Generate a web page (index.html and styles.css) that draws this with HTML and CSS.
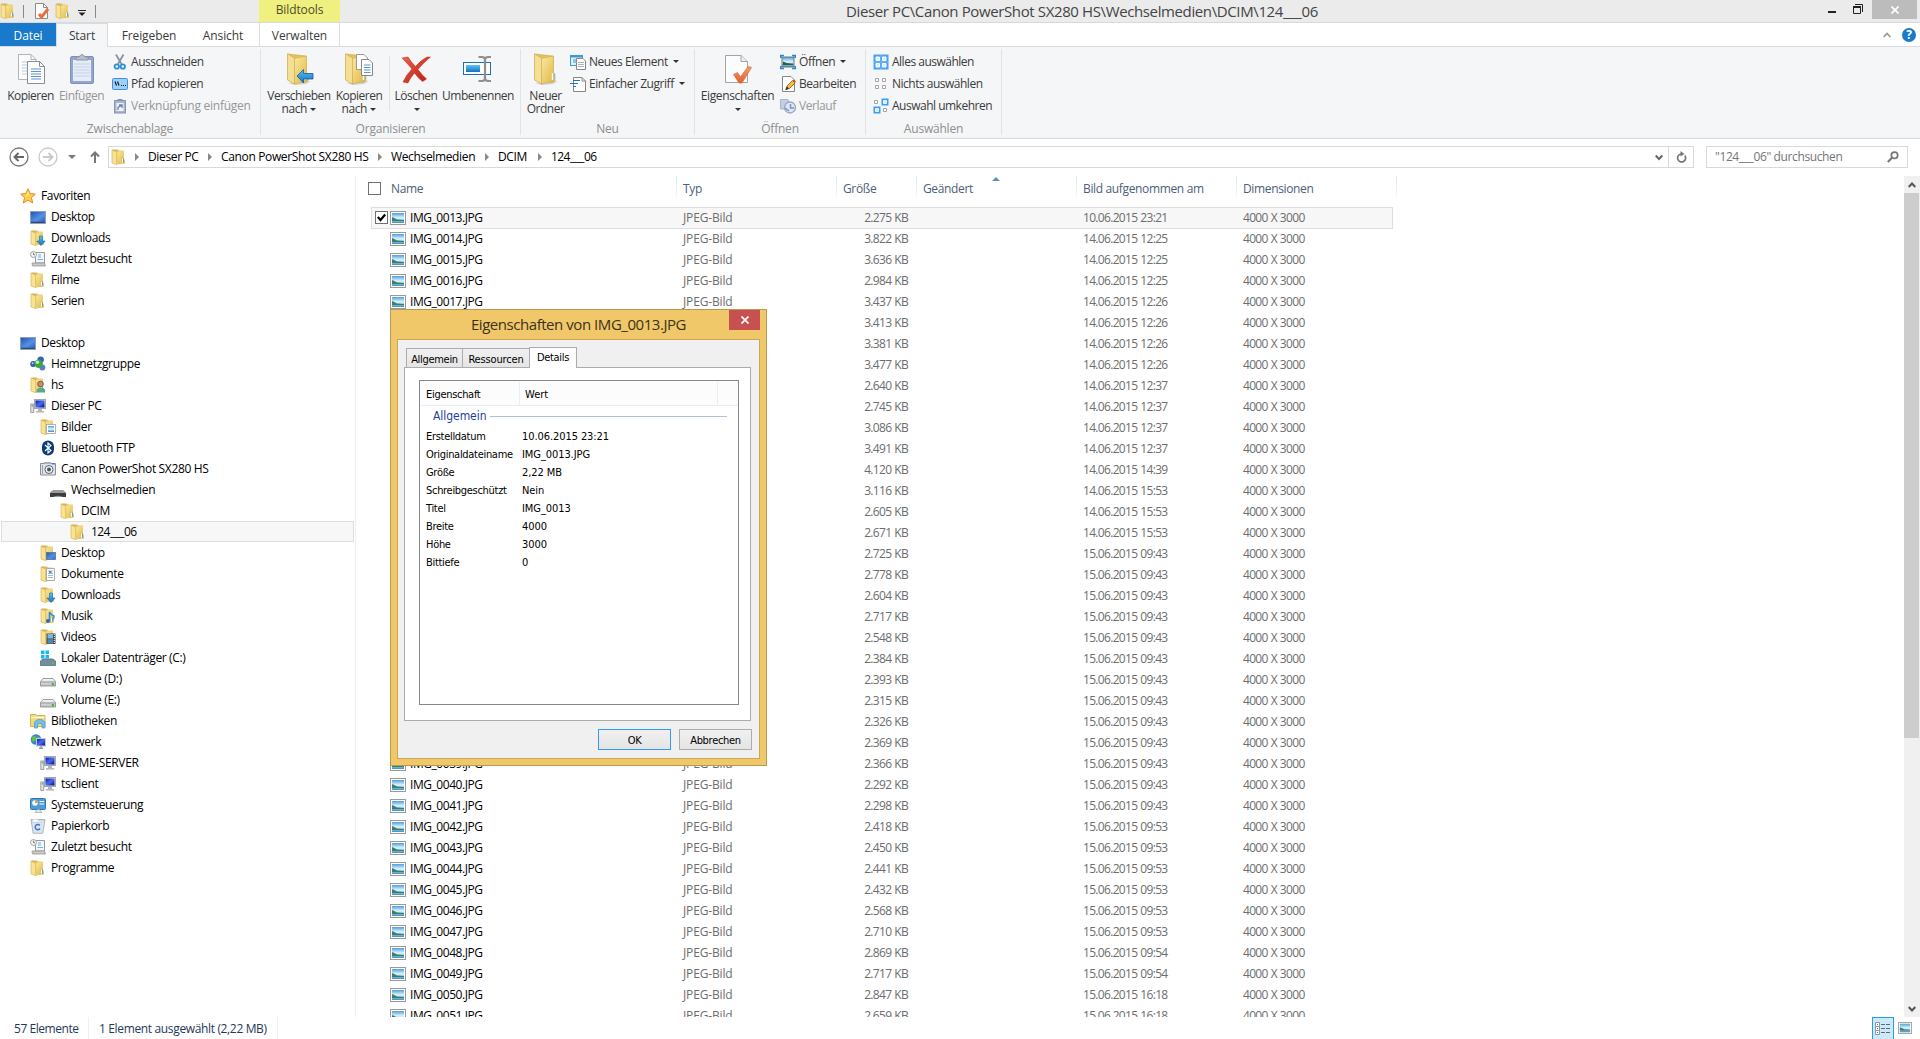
FILE: index.html
```
<!DOCTYPE html>
<html lang="de">
<head>
    <meta charset="UTF-8" />
    <meta name="viewport" content="width=device-width, initial-scale=1.0">
    <title>124___06</title>
    <link rel="stylesheet" href="styles.css">
</head>
<body>

<!-- Icon sprite -->
<svg class="sprite" aria-hidden="true">
    <defs>
        <linearGradient id="g-fold" x1="0" y1="0" x2="1" y2="1"><stop offset="0" stop-color="#fbeaa0"/><stop offset="1" stop-color="#dfb443"/></linearGradient>
        <linearGradient id="g-back" x1="0" y1="0" x2="1" y2="0"><stop offset="0" stop-color="#cfaa45"/><stop offset="1" stop-color="#f0d779"/></linearGradient>
        <linearGradient id="g-sky" x1="0" y1="0" x2="0" y2="1"><stop offset="0" stop-color="#4a9fe0"/><stop offset="0.5" stop-color="#e4f5fb"/><stop offset="1" stop-color="#3b8fc4"/></linearGradient>
        <linearGradient id="g-screen" x1="0" y1="0" x2="1" y2="1"><stop offset="0" stop-color="#2455b5"/><stop offset="0.6" stop-color="#5591e4"/><stop offset="1" stop-color="#2f62c0"/></linearGradient>
        <linearGradient id="g-navy" x1="0" y1="0" x2="1" y2="1"><stop offset="0" stop-color="#0a12b8"/><stop offset="0.5" stop-color="#4a6cf0"/><stop offset="1" stop-color="#05087a"/></linearGradient>
        <linearGradient id="g-disk" x1="0" y1="0" x2="0" y2="1"><stop offset="0" stop-color="#fafafa"/><stop offset="1" stop-color="#b9bcc2"/></linearGradient>
        <linearGradient id="g-arrow" x1="0" y1="0" x2="0" y2="1"><stop offset="0" stop-color="#5cc3f2"/><stop offset="1" stop-color="#1470c4"/></linearGradient>
        <linearGradient id="g-red" x1="0" y1="0" x2="1" y2="1"><stop offset="0" stop-color="#f0614a"/><stop offset="1" stop-color="#b81a10"/></linearGradient>
        <linearGradient id="g-orange" x1="0" y1="0" x2="0" y2="1"><stop offset="0" stop-color="#f4a06a"/><stop offset="1" stop-color="#e2602c"/></linearGradient>
    </defs>

    <symbol id="i-folder" viewBox="0 0 16 16">
        <path d="M1.500 .6H7L8 1.500H12.800V14H1.500Z" fill="url(#g-back)"/>
        <path d="M5.500 2.800L12.800 2V10.500L13.800 11.500V14.500L5.500 15.500Z" fill="url(#g-fold)"/>
        <path d="M1 1L5.700 3V15.700L1 14Z" fill="#f8e394" stroke="#d3ad48" stroke-width=".6"/>
        <path d="M11.500 10V13.600" stroke="#fff"/><path d="M12.600 9.500V13.600" stroke="#4a9fe0"/>
    </symbol>
    <symbol id="i-folder-lg" viewBox="0 0 26 32">
        <path d="M2 30L25 28L20 31L9 32Z" fill="#8a8a8a" opacity=".35"/>
        <path d="M2 1L20 3V29H8L2 27Z" fill="#e4c25e" stroke="#c9a545" stroke-width=".6"/>
        <path d="M8 5.500L20.500 3V20L22 21V28L8 31Z" fill="url(#g-fold)" stroke="#d0a940" stroke-width=".6"/>
        <path d="M1.500 .8L8.500 5V31L1.500 27Z" fill="#f4df94" stroke="#cfae50" stroke-width=".7"/>
        <path d="M19.500 20V27" stroke="#fff" stroke-width="1.400"/><path d="M21.200 20V27" stroke="#7fc0ea"/>
    </symbol>
    <symbol id="i-props" viewBox="0 0 16 16">
        <path d="M1.500 .5H9.500L13.500 4.500V15.500H1.500Z" fill="#fdfdfd" stroke="#8c8c8c"/><path d="M9.500 .5V4.500H13.500" fill="none" stroke="#8c8c8c"/>
        <path d="M5 11L7.500 14L14 6" fill="none" stroke="#e8703c" stroke-width="3"/>
    </symbol>
    <symbol id="i-picture" viewBox="0 0 16 14">
        <rect x=".5" y=".5" width="15" height="13" fill="#fff" stroke="#9a9a9a"/>
        <rect x="2" y="2" width="12" height="10" fill="url(#g-sky)"/>
        <path d="M2 6Q4 6.500 7 8.500L14 9V10H2Z" fill="#38806a"/>
    </symbol>
    <symbol id="i-star" viewBox="0 0 16 16"><path d="M8 .8L10.200 5.600L15.300 6.100L11.400 9.600L12.700 15L8 12.100L3.300 15L4.600 9.600L.7 6.100L5.800 5.600Z" fill="#ffcf4a" stroke="#e8862a"/><path d="M8 3.500L9 6.800L6 8Z" fill="#fff1b8"/></symbol>
    <symbol id="i-desktop" viewBox="0 0 16 16"><rect x=".5" y="2.500" width="15" height="12" fill="#40608f" stroke="#8ba0bd"/><rect x="1" y="3" width="14" height="9.500" fill="url(#g-screen)"/><path d="M1 13.500H15" stroke="#2f4a75"/></symbol>
    <symbol id="i-downloads" viewBox="0 0 16 16"><use href="#i-folder" width="16" height="16"/><path d="M9.500 6H12.500V11H15.200L11 15.600L6.800 11H9.500Z" fill="url(#g-arrow)" stroke="#1b69b0" stroke-width=".6"/></symbol>
    <symbol id="i-recent" viewBox="0 0 16 16">
        <path d="M5.500 1.500H14.500V12H5.500Z" fill="#f4f7fa" stroke="#9a9a9a"/><path d="M8 4H11M8 6H11M7.500 8.500H13" stroke="#6fb1e6"/>
        <path d="M2 12H14.500L15.500 15H2.500Z" fill="#c9c9c9" stroke="#8d8d8d" stroke-width=".7"/>
        <circle cx="3.500" cy="3.500" r="3" fill="#f1f1f1" stroke="#9c9c9c" stroke-width=".9"/><path d="M3.500 1.800V3.700H5" fill="none" stroke="#666" stroke-width=".8"/>
    </symbol>
    <symbol id="i-homegroup" viewBox="0 0 16 16">
        <circle cx="10.700" cy="3.600" r="3.200" fill="#3560c4"/><circle cx="3.200" cy="8" r="3" fill="#2f56c0"/><circle cx="12.300" cy="11.600" r="3" fill="#5b7cc8"/>
        <circle cx="8.600" cy="7.800" r="4.200" fill="#39a83c"/><circle cx="7.400" cy="6.300" r="1.700" fill="#c5efbb"/><circle cx="2.600" cy="7.200" r="1" fill="#c4d4f4"/>
    </symbol>
    <symbol id="i-user" viewBox="0 0 16 16"><use href="#i-folder" width="16" height="16"/><circle cx="10.500" cy="7" r="2.800" fill="#c98f68" stroke="#5e4630" stroke-width=".8"/><path d="M6.500 15.500V13Q10.500 8.500 15 12.500V15.500Z" fill="#5aa886"/></symbol>
    <symbol id="i-pc" viewBox="0 0 16 16">
        <rect x="4.500" y="1.500" width="11" height="9" fill="#d5d8dc" stroke="#a3a7ad"/><rect x="5.500" y="2.500" width="9" height="7" fill="url(#g-navy)"/>
        <path d="M8 11H12V13H14V14.500H6V13H8Z" fill="#b4b6ba"/><rect x=".8" y="6" width="3" height="8.500" fill="#dfe0e2" stroke="#8c8e92" stroke-width=".8"/><path d="M2.300 7V8.500" stroke="#55a040"/>
    </symbol>
    <symbol id="i-pictures" viewBox="0 0 16 16"><use href="#i-folder" width="16" height="16"/><rect x="6.500" y="5.500" width="9" height="9" fill="#fff" stroke="#9aa5ad" stroke-width=".8"/><rect x="8" y="7" width="6" height="6" fill="url(#g-sky)"/></symbol>
    <symbol id="i-bluetooth" viewBox="0 0 16 16"><rect x="2" y=".5" width="12" height="15" rx="6" fill="#0b3c78"/><path d="M5 5L11 10.500L8 13V3L11 5.500L5 11" fill="none" stroke="#fff" stroke-width="1.100"/></symbol>
    <symbol id="i-camera" viewBox="0 0 16 16">
        <path d="M.5 2.500H15.500V14H.5Z" fill="#dfe3e8" stroke="#87909a"/><path d="M4 1H11V3H4Z" fill="#a9b0b8"/><path d="M2.500 4V13" stroke="#9ba3ad"/>
        <circle cx="9" cy="8.500" r="4" fill="#f2f4f6" stroke="#5c6570"/><circle cx="9" cy="8.500" r="2" fill="#4b545e"/><rect x="12" y="2" width="3" height="1.500" fill="#3d83d6"/>
    </symbol>
    <symbol id="i-removable" viewBox="0 0 16 16"><path d="M3 8H13L16 10.500V15H0V10.500Z" fill="#9a9a9a"/><path d="M0 11H16V15H13Q8 12.500 3 15H0Z" fill="#3c3c3c"/></symbol>
    <symbol id="i-fdesktop" viewBox="0 0 16 16"><use href="#i-folder" width="16" height="16"/><rect x="6.500" y="7.500" width="9" height="7" fill="url(#g-screen)" stroke="#54759f" stroke-width=".8"/></symbol>
    <symbol id="i-documents" viewBox="0 0 16 16"><use href="#i-folder" width="16" height="16"/><path d="M6.500 2.500H14.500V14.500H6.500Z" fill="#fff" stroke="#9c9c9c" stroke-width=".8"/><path d="M8 5H13M8 7.500H13M8 9.500H13M8 11.500H13" stroke="#8fa9c2" stroke-width=".8"/><rect x="9" y="5" width="2.500" height="2" fill="#3b8ce0"/></symbol>
    <symbol id="i-music" viewBox="0 0 16 16"><use href="#i-folder" width="16" height="16"/><path d="M9.500 13V4Q11 7 14 8Q14.500 10 12.500 11.500" fill="none" stroke="#2a8de0" stroke-width="1.500"/><circle cx="8" cy="13" r="2" fill="#1c6fc4"/></symbol>
    <symbol id="i-videos" viewBox="0 0 16 16"><use href="#i-folder" width="16" height="16"/><rect x="6.500" y="4.500" width="9" height="10.500" fill="#444"/><rect x="7.500" y="5" width="5.500" height="4.500" fill="#7db6e4"/><rect x="7.500" y="10.200" width="5.500" height="4.500" fill="#4d86b8"/><path d="M14.300 5V15" stroke="#fff" stroke-dasharray="1 1"/></symbol>
    <symbol id="i-disk" viewBox="0 0 16 16"><path d="M3 7.500H13L15.500 10.500V15H.5V10.500Z" fill="url(#g-disk)" stroke="#858585" stroke-width=".8"/><path d="M1 11H15" stroke="#777" stroke-width=".7"/><rect x="11.800" y="12" width="2" height="2.300" fill="#35b52c"/></symbol>
    <symbol id="i-disk-c" viewBox="0 0 16 16"><path d="M3 9H13L15.500 11V15.500H.5V11Z" fill="#6f8f9c" stroke="#667" stroke-width=".8"/><rect x="12" y="12" width="2" height="2" fill="#40d040"/><path d="M1 .5H4.500V4H1ZM5.500 .5H9V4H5.500ZM1 5H4.500V8.500H1ZM5.500 5H9V8.500H5.500Z" fill="#19b9f1"/></symbol>
    <symbol id="i-libraries" viewBox="0 0 16 16"><path d="M.5 1.500H6L7 2.500H15V13.500H.5Z" fill="#f2d778" stroke="#c9a540" stroke-width=".8"/><path d="M1 4.500H14.500" stroke="#fff6cf" stroke-width="1.500"/><path d="M4.500 15V9Q9.500 3.500 15 9V15H12V11Q10 9.500 7.500 11V15Z" fill="#72c1ea" stroke="#4596c9" stroke-width=".7"/></symbol>
    <symbol id="i-network" viewBox="0 0 16 16"><circle cx="6" cy="5.500" r="5.300" fill="#2f86cf"/><path d="M2 2.500Q6 1 6.500 3.500T3 8Q.8 6 2 2.500ZM7 2L10 3.500L8 5.500Z" fill="#5cc04e"/><rect x="6.500" y="4.500" width="9" height="7.500" fill="url(#g-navy)" stroke="#c5c9d4"/><path d="M9 14.300H13M11 12V14" stroke="#9a9a9a" stroke-width="1.400"/></symbol>
    <symbol id="i-control" viewBox="0 0 16 16"><rect x=".5" y="1.500" width="15" height="11" rx="1" fill="#4c9edb" stroke="#3278b5"/><circle cx="5" cy="6" r="2.800" fill="#f7f7f7"/><path d="M5 6V3.200A2.800 2.800 0 0 1 7.800 6Z" fill="#f29a2e"/><path d="M9.500 4.500H14M9.500 7H14" stroke="#fff"/><path d="M5 15.500Q8 9 12 15.500Z" fill="#e4e6e8" stroke="#999" stroke-width=".6"/></symbol>
    <symbol id="i-trash" viewBox="0 0 16 16"><path d="M1 1.500L15 1.500L12.800 15.300H3.200Z" fill="#dbe5ee" stroke="#9fb0c0" stroke-width=".9"/><path d="M2 2Q6 0 8 2T14 2L13.500 4H2.300Z" fill="#fff" stroke="#b9c5d0" stroke-width=".6"/><path d="M9.800 7.500A2.600 2.600 0 1 0 10 10.500" fill="none" stroke="#3c7cd0" stroke-width="1.500"/></symbol>

    <symbol id="i-copy" viewBox="0 0 30 32">
        <path d="M2.500 1.500H15L20 6.500V26.500H2.500Z" fill="#fcfcfc" stroke="#b3b3b3"/><path d="M15 1.500V6.500H20" fill="none" stroke="#b3b3b3"/><path d="M6 9H14M6 12H12M6 15H12M6 18H12M6 21H12" stroke="#b7d0e6"/>
        <path d="M11.500 8.500H23.500L28.500 13.500V30.500H11.500Z" fill="#fff" stroke="#8d8d8d"/><path d="M23.500 8.500V13.500H28.500" fill="none" stroke="#8d8d8d"/><path d="M15 16H25M15 18.500H25M15 21H25M15 23.500H25M15 26H25" stroke="#5b95cf" stroke-width="1.200"/>
    </symbol>
    <symbol id="i-paste" viewBox="0 0 26 32"><rect x="1.500" y="3.500" width="23" height="27" rx="1.500" fill="#93a6cc" stroke="#7d90b8"/><rect x="4" y="7" width="18" height="21" fill="#e6ecf8"/><path d="M5 11H21M5 14H21M5 17H21M5 20H21M5 23H21" stroke="#c5d2ea"/><path d="M7 7V4H10Q13 -1 16 4H19V7Z" fill="#b9c0cc" stroke="#8c95a8"/></symbol>
    <symbol id="i-cut" viewBox="0 0 16 16"><path d="M4 .5L9.500 10M11.500 .5L6 10" stroke="#8b949e" stroke-width="1.800"/><circle cx="4.800" cy="12.500" r="2.200" fill="none" stroke="#2b8fd6" stroke-width="1.800"/><circle cx="10.800" cy="12.500" r="2.200" fill="none" stroke="#2b8fd6" stroke-width="1.800"/></symbol>
    <symbol id="i-path" viewBox="0 0 16 16"><rect x=".5" y="2.500" width="15" height="11" rx="1" fill="#9fd0fb" stroke="#3d8fe0"/><path d="M3 5.500L4.500 9.500M5.500 5.500L7 9.500M9 9.500H10M11 9.500H12M13 9.500H14" stroke="#111" stroke-width="1.100"/></symbol>
    <symbol id="i-link" viewBox="0 0 16 16"><rect x="2.500" y="2.500" width="11" height="12.500" fill="#a9b6d0" stroke="#8796b5"/><path d="M5.500 1H10.500V3H5.500Z" fill="#8796b5"/><rect x="4.500" y="5" width="7" height="8" fill="#eef2f9"/><path d="M6 12V9.500L9.500 7.500M7 7H10V10" fill="none" stroke="#6f81a8" stroke-width="1.300"/></symbol>
    <symbol id="i-moveto" viewBox="0 0 32 32"><use href="#i-folder-lg" x="3" width="26" height="32"/><path d="M14 23L20.500 16.500V20.500H30V26H20.500V30Z" fill="url(#g-arrow)" stroke="#17599a" stroke-width=".8"/></symbol>
    <symbol id="i-copyto" viewBox="0 0 32 32"><use href="#i-folder-lg" x="1" width="26" height="32"/><path d="M13.500 1.500H21L24.500 5V16.500H13.500Z" fill="#fdfdfd" stroke="#999"/><path d="M18.500 6.500H26L29.500 10V22.500H18.500Z" fill="#fff" stroke="#888"/><path d="M21 12H27.500M21 14.500H27.500M21 17H27.500M21 19.500H27.500" stroke="#5b95cf"/></symbol>
    <symbol id="i-delete" viewBox="0 0 32 32"><path d="M2 5L8 4Q11 9 15.500 13.500Q21 7 27 4L30.500 4Q22 11 18 16.500Q22 22 26.500 26L22.500 28.500Q18 25 14.500 20Q10 25 8 30L3 29Q6 22 12 16Q7 10 2 5Z" fill="url(#g-red)" stroke="#b5281a" stroke-width=".5"/></symbol>
    <symbol id="i-rename" viewBox="0 0 32 32"><rect x="1.500" y="9.500" width="27" height="12" fill="#fff" stroke="#1f6fb4"/><rect x="4" y="12" width="14" height="7" fill="url(#g-arrow)"/><path d="M16.500 4H20Q23 4 23 7V25Q23 28 20 28H16.500M29 4H26Q23 4 23 7V25Q23 28 26 28H29" fill="none" stroke="#8f8f8f" stroke-width="2.200"/></symbol>
    <symbol id="i-newitem" viewBox="0 0 16 16"><rect x=".5" y="1.500" width="12" height="10" fill="#dff0fb" stroke="#3f9ad4"/><path d="M1 2.500H12" stroke="#3f9ad4" stroke-width="2"/><path d="M3 6H6M3 8H6" stroke="#3f9ad4"/><path d="M6.500 4.500H13L15.500 7V15.500H6.500Z" fill="#fff" stroke="#888"/><path d="M8 8.500H14M8 10.500H14M8 12.500H14" stroke="#a9b4bf"/></symbol>
    <symbol id="i-access" viewBox="0 0 16 16"><path d="M3.500 1.500H12L15.500 5V15.500H3.500Z" fill="#fff" stroke="#888"/><path d="M12 1.500V5H15.500" fill="none" stroke="#888"/><path d="M3 4.500H10M0 7.500H8M3 10.500H6" stroke="#2474c4" stroke-width="1.200"/></symbol>
    <symbol id="i-props-lg" viewBox="0 0 28 32"><path d="M1.500 2.500H17L23.500 8.500V29.500H1.500Z" fill="#fcfcfc" stroke="#a3a3a3"/><path d="M17 2.500V8.500H23.500" fill="#eee" stroke="#a3a3a3"/><path d="M9.500 21.500L13.500 19.500L16.500 24L24 13.500L27.500 14.500L18 30H15Z" fill="url(#g-orange)" stroke="#d0602f" stroke-width=".6"/></symbol>
    <symbol id="i-open" viewBox="0 0 16 16"><rect x="2" y="3" width="12" height="10" fill="url(#g-sky)" stroke="#777"/><path d="M3 7.500Q7 10 13 9.500V11H3Z" fill="#25604c"/><path d="M.8 4V1.500H4M12 1.500H15.200V4M15.200 12V14.500H12M4 14.500H.8V12" fill="none" stroke="#2d87d2" stroke-width="1.700"/></symbol>
    <symbol id="i-edit" viewBox="0 0 16 16"><path d="M2.500 .5H11L14.500 4V15.500H2.500Z" fill="#fff" stroke="#888"/><path d="M6 13.500L7 10L12.500 4.500L15 7L9.500 12.500Z" fill="#f1bf3c" stroke="#8b5a20" stroke-width=".8"/><path d="M12.500 4.500L14 3.500L15.800 5.500L15 7Z" fill="#d9482f"/><path d="M5 14.300L7 10.500L9 12.500Z" fill="#333"/></symbol>
    <symbol id="i-history" viewBox="0 0 16 16"><path d="M.5 1.500H8L9 5V11H.5Z" fill="#c5cfe2" stroke="#a9b5cf"/><circle cx="10" cy="9.500" r="5.500" fill="#dfe5f1" stroke="#98a6c6" stroke-width="1.300"/><path d="M10.500 6V10H14M5 10L9 13" fill="none" stroke="#8293ba" stroke-width="1.500"/></symbol>
    <symbol id="i-selall" viewBox="0 0 16 16"><path d="M.5 .5H15.500V15.500H.5Z" fill="#48a2f5"/><path d="M3 3H6.500V6.500H3ZM9.500 3H13V6.500H9.500ZM3 9.500H6.500V13H3ZM9.500 9.500H13V13H9.500Z" fill="#d7ecff" stroke="#fff"/><path d="M8 1V15M1 8H15" stroke="#7cbcf7" stroke-width=".8"/></symbol>
    <symbol id="i-selnone" viewBox="0 0 16 16"><path d="M2.500 2.500H5.500V5.500H2.500ZM9.500 2.500H12.500V5.500H9.500ZM2.500 9.500H5.500V12.500H2.500ZM9.500 9.500H12.500V12.500H9.500Z" fill="#fff" stroke="#a3a3a3"/></symbol>
    <symbol id="i-selinv" viewBox="0 0 16 16"><path d="M8.500 .5H15.500V7.500H8.500ZM.5 8.500H7.500V15.500H.5Z" fill="#3f9df3"/><path d="M10.500 2.500H13.500V5.500H10.500ZM2.500 10.500H5.500V13.500H2.500Z" fill="#d7ecff" stroke="#fff" stroke-width=".8"/><path d="M1.500 2.500H4.500V5.500H1.500ZM10.500 10.500H13.500V13.500H10.500Z" fill="#fff" stroke="#a3a3a3"/></symbol>
</svg>

<!-- Title bar -->
<header class="titlebar">
    <div class="quick">
        <svg class="ico"><use href="#i-folder"/></svg>
        <span class="bar"></span>
        <svg class="ico"><use href="#i-props"/></svg>
        <svg class="ico"><use href="#i-folder"/></svg>
        <svg class="more" viewBox="0 0 8 6"><path d="M0 .5H8" stroke="#222"/><path d="M.5 2.500H7.500L4 6Z" fill="#222"/></svg>
        <span class="bar"></span>
    </div>
    <div class="tooltab">Bildtools</div>
    <h1 class="title">Dieser PC\Canon PowerShot SX280 HS\Wechselmedien\DCIM\124___06</h1>
    <div class="controls">
        <svg class="min" viewBox="0 0 8 2"><path d="M0 0H8V2H0Z" fill="#222"/></svg>
        <svg class="restore" viewBox="0 0 10 10"><path d="M2 .5H9.500V8M.5 9.500V3H7.500V9.500Z" fill="none" stroke="#222"/><path d="M0 3H8" stroke="#222" stroke-width="2"/></svg>
        <span class="close"><svg viewBox="0 0 8 8"><path d="M.5 .5L7.500 7.500M7.500 .5L.5 7.500" stroke="#fff" stroke-width="1.600"/></svg></span>
    </div>
</header>

<!-- Ribbon tabs -->
<nav class="tabs">
    <span class="tab file">Datei</span>
    <span class="tab active">Start</span>
    <span class="tab share">Freigeben</span>
    <span class="tab view">Ansicht</span>
    <span class="tab manage">Verwalten</span>
    <div class="tabs-right">
        <svg class="chev" viewBox="0 0 8 6"><path d="M.7 5L4 1.500L7.300 5" fill="none" stroke="#999" stroke-width="1.800"/></svg>
        <span class="help">?</span>
    </div>
</nav>

<!-- Ribbon -->
<section class="ribbon">
    <div class="group clip">
        <div class="tools">
            <div class="big copy"><svg width="30" height="32"><use href="#i-copy"/></svg><span>Kopieren</span></div>
            <div class="big paste off"><svg width="26" height="32"><use href="#i-paste"/></svg><span>Einfügen</span></div>
            <div class="small-col">
                <div class="small"><svg class="ico"><use href="#i-cut"/></svg>Ausschneiden</div>
                <div class="small"><svg class="ico"><use href="#i-path"/></svg>Pfad kopieren</div>
                <div class="small link off"><svg class="ico"><use href="#i-link"/></svg>Verknüpfung einfügen</div>
            </div>
        </div>
        <div class="label">Zwischenablage</div>
    </div>
    <div class="group organize">
        <div class="tools">
            <div class="big move"><svg width="32" height="32"><use href="#i-moveto"/></svg><span>Verschieben<br>nach <i class="caret"></i></span></div>
            <div class="big copyto"><svg width="32" height="32"><use href="#i-copyto"/></svg><span>Kopieren<br>nach <i class="caret"></i></span></div>
            <div class="divider"></div>
            <div class="big delete"><svg width="32" height="32"><use href="#i-delete"/></svg><span>Löschen<br><i class="caret"></i></span></div>
            <div class="big rename"><svg width="32" height="32"><use href="#i-rename"/></svg><span>Umbenennen</span></div>
        </div>
        <div class="label">Organisieren</div>
    </div>
    <div class="group new">
        <div class="tools">
            <div class="big folder"><svg width="26" height="32"><use href="#i-folder-lg"/></svg><span>Neuer<br>Ordner</span></div>
            <div class="small-col">
                <div class="small"><svg class="ico"><use href="#i-newitem"/></svg>Neues Element <i class="caret"></i></div>
                <div class="small"><svg class="ico"><use href="#i-access"/></svg>Einfacher Zugriff <i class="caret"></i></div>
            </div>
        </div>
        <div class="label">Neu</div>
    </div>
    <div class="group open">
        <div class="tools">
            <div class="big props"><svg width="28" height="32"><use href="#i-props-lg"/></svg><span>Eigenschaften<br><i class="caret"></i></span></div>
            <div class="small-col">
                <div class="small"><svg class="ico"><use href="#i-open"/></svg>Öffnen <i class="caret"></i></div>
                <div class="small"><svg class="ico"><use href="#i-edit"/></svg>Bearbeiten</div>
                <div class="small off"><svg class="ico"><use href="#i-history"/></svg>Verlauf</div>
            </div>
        </div>
        <div class="label">Öffnen</div>
    </div>
    <div class="group select">
        <div class="tools">
            <div class="small-col">
                <div class="small"><svg class="ico"><use href="#i-selall"/></svg>Alles auswählen</div>
                <div class="small"><svg class="ico"><use href="#i-selnone"/></svg>Nichts auswählen</div>
                <div class="small"><svg class="ico"><use href="#i-selinv"/></svg>Auswahl umkehren</div>
            </div>
        </div>
        <div class="label">Auswählen</div>
    </div>
</section>

<!-- Address bar -->
<div class="addressbar">
    <div class="navbtns">
        <svg class="round" viewBox="0 0 20 20"><circle cx="10" cy="10" r="9" fill="none" stroke="#777" stroke-width="1.300"/><path d="M15 10H6M9.500 6L5.500 10L9.500 14" fill="none" stroke="#666" stroke-width="1.900"/></svg>
        <svg class="round" viewBox="0 0 20 20"><circle cx="10" cy="10" r="9" fill="none" stroke="#c9c9c9" stroke-width="1.300"/><path d="M5 10H14M10.500 6L14.500 10L10.500 14" fill="none" stroke="#c9c9c9" stroke-width="1.900"/></svg>
        <svg class="hist" viewBox="0 0 8 4"><path d="M0 0H8L4 4Z" fill="#777"/></svg>
        <svg class="up" viewBox="0 0 10 12"><path d="M5 12V1.500M1 5.500L5 1.500L9 5.500" fill="none" stroke="#777" stroke-width="2"/></svg>
    </div>
    <div class="path">
        <svg class="ico"><use href="#i-folder"/></svg>
        <i class="arrow"></i><span class="c-pc">Dieser PC</span>
        <i class="arrow"></i><span class="c-canon">Canon PowerShot SX280 HS</span>
        <i class="arrow"></i><span class="c-media">Wechselmedien</span>
        <i class="arrow"></i><span class="c-dcim">DCIM</span>
        <i class="arrow"></i><span class="c-dir">124___06</span>
        <svg class="drop" viewBox="0 0 8 7"><path d="M.7 1.500L4 5L7.300 1.500" fill="none" stroke="#666" stroke-width="2"/></svg>
        <span class="refresh"><svg viewBox="0 0 11 12"><path d="M8.800 4.500A4 4 0 1 1 5 3" fill="none" stroke="#777" stroke-width="1.700"/><path d="M4.500 0L8.500 3L4.500 5.500Z" fill="#777"/></svg></span>
    </div>
    <div class="search">
        <span>"124___06" durchsuchen</span>
        <svg viewBox="0 0 12 12"><circle cx="7.500" cy="4.300" r="3.200" fill="none" stroke="#777" stroke-width="1.700"/><path d="M5 6.800L.8 11" stroke="#777" stroke-width="2"/></svg>
    </div>
</div>

<!-- Content -->
<main class="content">
    <aside class="tree">
        <div class="node l0"><svg class="ico"><use href="#i-star"/></svg>Favoriten</div>
        <div class="node l1"><svg class="ico"><use href="#i-desktop"/></svg>Desktop</div>
        <div class="node l1"><svg class="ico"><use href="#i-downloads"/></svg>Downloads</div>
        <div class="node l1"><svg class="ico"><use href="#i-recent"/></svg>Zuletzt besucht</div>
        <div class="node l1"><svg class="ico"><use href="#i-folder"/></svg>Filme</div>
        <div class="node l1 last"><svg class="ico"><use href="#i-folder"/></svg>Serien</div>
        <div class="node l0"><svg class="ico"><use href="#i-desktop"/></svg>Desktop</div>
        <div class="node l1"><svg class="ico"><use href="#i-homegroup"/></svg>Heimnetzgruppe</div>
        <div class="node l1"><svg class="ico"><use href="#i-user"/></svg>hs</div>
        <div class="node l1"><svg class="ico"><use href="#i-pc"/></svg>Dieser PC</div>
        <div class="node l2"><svg class="ico"><use href="#i-pictures"/></svg>Bilder</div>
        <div class="node l2"><svg class="ico"><use href="#i-bluetooth"/></svg>Bluetooth FTP</div>
        <div class="node l2"><svg class="ico"><use href="#i-camera"/></svg>Canon PowerShot SX280 HS</div>
        <div class="node l3"><svg class="ico"><use href="#i-removable"/></svg>Wechselmedien</div>
        <div class="node l4"><svg class="ico"><use href="#i-folder"/></svg>DCIM</div>
        <div class="node l5 selected"><svg class="ico"><use href="#i-folder"/></svg>124___06</div>
        <div class="node l2"><svg class="ico"><use href="#i-fdesktop"/></svg>Desktop</div>
        <div class="node l2"><svg class="ico"><use href="#i-documents"/></svg>Dokumente</div>
        <div class="node l2"><svg class="ico"><use href="#i-downloads"/></svg>Downloads</div>
        <div class="node l2"><svg class="ico"><use href="#i-music"/></svg>Musik</div>
        <div class="node l2"><svg class="ico"><use href="#i-videos"/></svg>Videos</div>
        <div class="node l2"><svg class="ico"><use href="#i-disk-c"/></svg>Lokaler Datenträger (C:)</div>
        <div class="node l2"><svg class="ico"><use href="#i-disk"/></svg>Volume (D:)</div>
        <div class="node l2"><svg class="ico"><use href="#i-disk"/></svg>Volume (E:)</div>
        <div class="node l1"><svg class="ico"><use href="#i-libraries"/></svg>Bibliotheken</div>
        <div class="node l1"><svg class="ico"><use href="#i-network"/></svg>Netzwerk</div>
        <div class="node l2"><svg class="ico"><use href="#i-pc"/></svg>HOME-SERVER</div>
        <div class="node l2"><svg class="ico"><use href="#i-pc"/></svg>tsclient</div>
        <div class="node l1"><svg class="ico"><use href="#i-control"/></svg>Systemsteuerung</div>
        <div class="node l1"><svg class="ico"><use href="#i-trash"/></svg>Papierkorb</div>
        <div class="node l1"><svg class="ico"><use href="#i-recent"/></svg>Zuletzt besucht</div>
        <div class="node l1"><svg class="ico"><use href="#i-folder"/></svg>Programme</div>
    </aside>

    <section class="files">
        <div class="columns">
            <div class="col name"><span class="check"></span>Name</div>
            <div class="col">Typ</div>
            <div class="col">Größe</div>
            <div class="col sorted">Geändert<i class="sort"></i></div>
            <div class="col">Bild aufgenommen am</div>
            <div class="col">Dimensionen</div>
        </div>
        <div id="rows"></div>
    </section>

    <div class="scrollbar">
        <svg viewBox="0 0 8 6"><path d="M.7 5L4 1.500L7.300 5" fill="none" stroke="#555" stroke-width="2"/></svg>
        <div class="thumb"></div>
        <svg viewBox="0 0 8 6"><path d="M.7 1L4 4.500L7.300 1" fill="none" stroke="#555" stroke-width="2"/></svg>
    </div>
</main>

<!-- Status bar -->
<footer class="status">
    <span class="count">57 Elemente</span>
    <span class="picked">1 Element ausgewählt (2,22 MB)</span>
    <div class="views">
        <span class="viewbtn on"><svg width="16" height="14" viewBox="0 0 16 14"><path d="M.5 .5H4.500V4.500H.5ZM.5 4.500H4.500V8.500H.5ZM.5 8.500H4.500V12.500H.5Z" fill="#fff" stroke="#8896b0"/><path d="M2 2H3V3H2Z" fill="#3a9a30"/><path d="M2 6H3V7H2Z" fill="#e02020"/><path d="M2 10H3V11H2Z" fill="#2060d0"/><path d="M6 2.500H10M11 2.500H15M6 6.500H10M11 6.500H15M6 10.500H10M11 10.500H15" stroke="#566a86"/></svg></span>
        <svg class="thumbs" width="14" height="12"><use href="#i-picture"/></svg>
    </div>
</footer>

<!-- Properties dialog -->
<div class="dialog">
    <div class="dlg-title"><span>Eigenschaften von IMG_0013.JPG</span></div>
    <span class="dlg-close"><svg viewBox="0 0 8 8"><path d="M.5 .5L7.500 7.500M7.500 .5L.5 7.500" stroke="#fff" stroke-width="1.700"/></svg></span>
    <div class="dlg-body">
        <div class="dlg-tabs">
            <span class="dtab t-general">Allgemein</span>
            <span class="dtab t-res">Ressourcen</span>
            <span class="dtab t-details">Details</span>
        </div>
        <div class="page">
            <div class="proplist">
                <div class="prophead"><span class="key">Eigenschaft</span><span class="val">Wert</span><span class="rest"></span></div>
                <div class="propgroup">Allgemein</div>
                <dl>
                    <dt>Erstelldatum</dt><dd>10.06.2015 23:21</dd>
                    <dt>Originaldateiname</dt><dd>IMG_0013.JPG</dd>
                    <dt>Größe</dt><dd>2,22 MB</dd>
                    <dt>Schreibgeschützt</dt><dd>Nein</dd>
                    <dt>Titel</dt><dd>IMG_0013</dd>
                    <dt>Breite</dt><dd>4000</dd>
                    <dt>Höhe</dt><dd>3000</dd>
                    <dt>Bittiefe</dt><dd>0</dd>
                </dl>
            </div>
        </div>
        <div class="buttons"><span class="btn default">OK</span><span class="btn">Abbrechen</span></div>
    </div>
</div>

<script src="script.js"></script>
</body>
</html>
```
FILE: styles.css
```
/* Base Styles */
* {
    margin: 0;
    padding: 0;
    box-sizing: border-box;
}

body {
    width: 1920px;
    height: 1039px;
    overflow: hidden;
    display: flex;
    flex-direction: column;
    position: relative;
    background: #fff;
    color: #000;
    font-family: "Open Sans", "Noto Sans", sans-serif;
    font-size: 12px;
    letter-spacing: -0.35px;
    white-space: nowrap;
}

svg {
    display: block;
    flex: none;
}

.sprite {
    position: absolute;
    width: 0;
    height: 0;
}

.ico {
    width: 16px;
    height: 16px;
}

/* Title bar */
.titlebar {
    flex: none;
    display: flex;
    height: 23px;
    background: #ebebeb;
    border-bottom: 1px solid #d9d9d9;
}

.quick {
    display: flex;
    width: 259px;
    padding-top: 3px;
}

.quick .bar {
    width: 1px;
    height: 13px;
    margin: 2px 10px 0 7px;
    background: #888;
}

.quick .ico + .ico {
    margin-left: 5px;
}

.quick .more {
    width: 8px;
    height: 6px;
    margin: 7px 2px 0 7px;
}

.tooltab {
    width: 81px;
    background: #f0f080;
    color: #4d4d28;
    text-align: center;
    line-height: 20px;
    letter-spacing: -0.1px;
}

.title {
    flex: 1;
    padding-left: 506px;
    font-size: 15px;
    font-weight: normal;
    line-height: 23px;
    letter-spacing: -0.38px;
    color: #444;
}

.controls {
    display: flex;
    width: 92px;
}

.min {
    width: 8px;
    height: 2px;
    margin: 11px 17px 0 0;
}

.restore {
    width: 10px;
    height: 10px;
    margin: 4px 9px 0 0;
}

.close {
    display: flex;
    align-items: center;
    justify-content: center;
    width: 45px;
    height: 19px;
    background: #bcbcbc;
}

.close svg,
.dlg-close svg {
    width: 8px;
    height: 8px;
}

/* Ribbon tabs */
.tabs {
    flex: none;
    display: flex;
    height: 24px;
    border-bottom: 1px solid #dadbdc;
    color: #3b3b3b;
    letter-spacing: -0.1px;
    line-height: 26px;
    text-align: center;
}

.tab {
    height: 23px;
}

.tab.file {
    width: 56px;
    background: #1979ca;
    color: #fff;
}

.tab.active {
    width: 52px;
    height: 24px;
    background: #f5f6f7;
    border: 1px solid #dadbdc;
    border-bottom: 0;
    line-height: 24px;
}

.tab.share {
    width: 82px;
}

.tab.view {
    width: 66px;
}

.tab.manage {
    width: 81px;
    margin-left: 3px;
    border: solid #dcdcdc;
    border-width: 0 1px;
}

.tabs-right {
    display: flex;
    align-items: center;
    margin-left: auto;
    padding-right: 4px;
}

.chev {
    width: 8px;
    height: 6px;
    margin-right: 11px;
}

.help {
    width: 14px;
    height: 14px;
    border-radius: 7px;
    background: #1979ca;
    color: #fff;
    font-weight: bold;
    line-height: 14px;
}

/* Ribbon */
.ribbon {
    flex: none;
    display: flex;
    height: 92px;
    padding-top: 2px;
    background: #f5f6f7;
    border-bottom: 1px solid #dadbdc;
    color: #3b3b3b;
    letter-spacing: -0.45px;
}

.group {
    display: flex;
    flex-direction: column;
    height: 86px;
    border-right: 1px solid #e2e3e4;
}

.group.clip {
    width: 261px;
}

.group.organize {
    width: 260px;
}

.group.new {
    width: 174px;
}

.group.open {
    width: 171px;
}

.group.select {
    width: 136px;
}

.tools {
    flex: none;
    display: flex;
    height: 71px;
    padding-top: 4px;
}

.label {
    color: #8e8e8e;
    text-align: center;
    line-height: 17px;
    letter-spacing: -0.2px;
}

.big {
    flex: none;
    display: flex;
    flex-direction: column;
    align-items: center;
    text-align: center;
    line-height: 13px;
    letter-spacing: -0.5px;
}

.big span {
    margin-top: 4px;
}

.big .caret {
    margin-left: 1px;
}

.off {
    color: #969696;
}

.big.copy {
    width: 51px;
    margin-left: 5px;
}

.big.paste {
    width: 51px;
    margin-right: 5px;
}

.big.move {
    width: 64px;
    margin-left: 6px;
}

.big.copyto {
    width: 56px;
}

.big.delete {
    width: 52px;
}

.big.rename {
    width: 72px;
}

.big.folder {
    width: 49px;
}

.big.props {
    width: 85px;
    letter-spacing: -0.35px;
}

.divider {
    width: 1px;
    height: 55px;
    margin: 3px 0 0 2px;
    background: #e2e3e4;
}

.small-col {
    display: flex;
    flex-direction: column;
}

.select .small-col {
    margin-left: 7px;
}

.small {
    display: flex;
    align-items: center;
    gap: 3px;
    height: 22px;
    margin-top: -3px;
    margin-bottom: 3px;
}

.small .ico {
    margin-top: 1px;
}

.small .caret {
    margin-left: 2px;
}

.small.link {
    letter-spacing: -0.25px;
}

.select .small {
    letter-spacing: -0.5px;
}

.caret {
    display: inline-block;
    width: 0;
    height: 0;
    border: solid transparent;
    border-width: 3px 3px 0;
    border-top-color: #333;
    vertical-align: 2px;
}

/* Address bar */
.addressbar {
    flex: none;
    display: flex;
    height: 37px;
    padding-top: 7px;
    line-height: 20px;
}

.navbtns {
    display: flex;
    align-items: center;
    width: 108px;
    height: 22px;
    padding-left: 9px;
}

.round {
    width: 20px;
    height: 20px;
    margin-right: 9px;
}

.hist {
    width: 8px;
    height: 4px;
    margin-left: 1px;
}

.up {
    width: 10px;
    height: 12px;
    margin-left: 14px;
}

.path {
    display: flex;
    align-items: center;
    width: 1586px;
    height: 22px;
    padding-left: 2px;
    border: 1px solid #d9d9d9;
}

.arrow {
    width: 0;
    height: 0;
    border: solid transparent;
    border-width: 4px 0 4px 4px;
    border-left-color: #888;
    margin-right: 9px;
}

.path .ico + .arrow {
    margin-left: 8px;
}

.c-pc {
    width: 60px;
}

.c-canon {
    width: 157px;
}

.c-media {
    width: 94px;
}

.c-dcim {
    width: 40px;
}

.c-dir {
    letter-spacing: -0.55px;
}

.drop {
    width: 8px;
    height: 7px;
    margin-left: auto;
    margin-right: 5px;
}

.refresh {
    display: flex;
    align-items: center;
    justify-content: center;
    width: 25px;
    height: 20px;
    border-left: 1px solid #d9d9d9;
}

.refresh svg {
    width: 11px;
    height: 12px;
}

.search {
    display: flex;
    align-items: center;
    justify-content: space-between;
    width: 202px;
    height: 22px;
    margin-left: 12px;
    padding: 0 8px;
    border: 1px solid #d9d9d9;
    color: #757575;
    letter-spacing: -0.38px;
}

.search svg {
    width: 12px;
    height: 12px;
}

/* Content */
.content {
    display: flex;
    height: 841px;
}

.tree {
    width: 356px;
    padding-top: 9px;
    border-right: 1px solid #f0f0f0;
}

.node {
    display: flex;
    align-items: center;
    gap: 5px;
    height: 21px;
}

.node.last {
    margin-bottom: 21px;
}

.l0 {
    padding-left: 20px;
}

.l1 {
    padding-left: 30px;
}

.l2 {
    padding-left: 40px;
}

.l3 {
    padding-left: 50px;
}

.l4 {
    padding-left: 60px;
}

.l5 {
    padding-left: 70px;
}

.node.selected {
    width: 353px;
    margin-left: 1px;
    padding-left: 68px;
    background: #f7f7f7;
    border: 1px solid #dedede;
    letter-spacing: -0.55px;
}

.files {
    width: 1548px;
    overflow: hidden;
}

.columns {
    display: flex;
    height: 21px;
    margin-bottom: 10px;
    color: #4c607a;
}

.col {
    display: flex;
    align-items: center;
    width: 160px;
    padding: 3px 0 0 6px;
    border-right: 1px solid;
    border-image: linear-gradient(#d5e6f5, #f4f8fc) 1;
}

.col.name {
    width: 321px;
    padding-left: 12px;
}

.col:nth-child(3) {
    width: 80px;
}

.col.sorted {
    position: relative;
}

.sort {
    position: absolute;
    top: 1px;
    left: 75px;
    border: solid transparent;
    border-width: 0 4px 4px;
    border-bottom-color: #5a93b8;
}

.check {
    flex: none;
    display: flex;
    align-items: center;
    justify-content: center;
    width: 13px;
    height: 13px;
    border: 1px solid #707070;
    background: #fff;
}

.col .check {
    margin-right: 10px;
}

.row {
    display: grid;
    grid-template-columns: 305px 160px 71px 169px 160px 155px;
    align-items: center;
    width: 1022px;
    height: 22px;
    margin: 0 0 -1px 15px;
    border: 1px solid transparent;
    color: #6d6d6d;
    line-height: 20px;
    letter-spacing: -0.68px;
    word-spacing: 0.5px;
}

.row.selected {
    background: #f7f7f7;
    border-color: #dedede;
}

.row > span {
    height: 20px;
    padding-left: 6px;
}

.row .fname {
    display: flex;
    align-items: flex-start;
    padding-left: 18px;
    color: #000;
    letter-spacing: -0.45px;
}

.row.selected .fname {
    padding-left: 3px;
}

.fname .check {
    margin: 3px 2px 0 0;
}

.fname .pic {
    width: 16px;
    height: 14px;
    margin: 3px 4px 0 0;
}

.row .size {
    text-align: right;
}

.row .type {
    letter-spacing: -0.15px;
}

.scrollbar {
    display: flex;
    flex-direction: column;
    align-items: center;
    width: 16px;
    background: #f0f0f0;
}

.scrollbar svg {
    width: 8px;
    height: 6px;
    margin: 6px 0 5px;
}

.scrollbar .thumb {
    width: 16px;
    height: 545px;
    border-right: 1px solid #f0f0f0;
    background: #cdcdcd;
}

.scrollbar .thumb + svg {
    margin-top: auto;
}

/* Status bar */
.status {
    display: flex;
    height: 22px;
    color: #1e395b;
    line-height: 23px;
}

.count,
.picked {
    border-right: 1px solid #f0f0f0;
}

.count {
    width: 89px;
    padding-left: 14px;
    letter-spacing: -0.45px;
}

.picked {
    width: 189px;
    padding-left: 10px;
}

.views {
    display: flex;
    align-items: center;
    margin-left: auto;
    padding-right: 8px;
}

.viewbtn {
    display: flex;
    align-items: center;
    justify-content: center;
    width: 22px;
    height: 23px;
    margin-right: 4px;
    background: #cde8f6;
    border: 1px solid #26a0da;
    border-bottom: 0;
}

/* Properties dialog */
.dialog {
    position: absolute;
    left: 390px;
    top: 309px;
    width: 377px;
    height: 457px;
    padding: 0 6px 6px;
    background: #f0c869;
    border: 1px solid #b89b50;
    font-family: "DejaVu Sans Condensed", "DejaVu Sans", sans-serif;
    font-size: 11px;
    letter-spacing: -0.3px;
}

.dlg-title {
    height: 29px;
    font-family: "Open Sans", sans-serif;
    font-size: 15px;
    line-height: 28px;
    letter-spacing: -0.45px;
    text-align: center;
    color: #3c321a;
}

.dlg-close {
    position: absolute;
    top: 0;
    right: 6px;
    display: flex;
    align-items: center;
    justify-content: center;
    width: 31px;
    height: 20px;
    background: #c75050;
}

.dlg-body {
    height: 420px;
    padding: 7px 7px 0 6px;
    background: #f0f0f0;
    border: 1px solid #c8a75a;
}

.dlg-tabs {
    display: flex;
    align-items: flex-end;
    height: 21px;
    margin-bottom: -1px;
    padding-left: 2px;
    position: relative;
}

.dtab {
    height: 19px;
    margin-bottom: 1px;
    border: 1px solid #acacac;
    border-bottom: 0;
    background: linear-gradient(#f0f0f0, #e5e5e5);
    line-height: 21px;
    text-align: center;
}

.t-general {
    width: 57px;
}

.t-res {
    width: 66px;
    border-left: 0;
    border-right: 0;
    letter-spacing: -0.15px;
}

.t-details {
    width: 48px;
    height: 21px;
    margin-bottom: 0;
    background: #fff;
    line-height: 19px;
}

.page {
    height: 354px;
    padding: 12px 11px 0 14px;
    width: 347px;
    background: #fff;
    border: 1px solid #acacac;
}

.proplist {
    width: 320px;
    height: 325px;
    border: 1px solid #828790;
}

.prophead {
    display: flex;
    height: 25px;
    padding: 1px 1px 0;
    line-height: 25px;
    background: #fcfcfc;
    border-bottom: 1px solid #e6eef6;
}

.prophead .key {
    width: 99px;
    padding-left: 5px;
    border-right: 1px solid #e6eef6;
}

.prophead .val {
    width: 198px;
    padding-left: 5px;
    border-right: 1px solid #e6eef6;
    letter-spacing: 0;
}

.propgroup {
    display: flex;
    align-items: center;
    height: 20px;
    margin-bottom: 2px;
    padding: 0 11px 0 13px;
    color: #1c3fa0;
    font-size: 12px;
    letter-spacing: -0.05px;
}

.propgroup::after {
    content: "";
    flex: 1;
    height: 1px;
    margin-left: 4px;
    background: #b0bfdc;
}

.proplist dl {
    display: grid;
    grid-template-columns: 96px 1fr;
    grid-auto-rows: 18px;
    padding-left: 6px;
    line-height: 18px;
}

.proplist dd {
    letter-spacing: -0.08px;
}

.buttons {
    display: flex;
    justify-content: flex-end;
    gap: 8px;
    padding-top: 8px;
}

.btn {
    width: 73px;
    height: 21px;
    background: linear-gradient(#f0f0f0, #e5e5e5);
    border: 1px solid #acacac;
    line-height: 21px;
    text-align: center;
}

.btn.default {
    border-color: #3399ff;
}
```
FILE: script.js
```
// size in KB and capture date, starting with IMG_0013
const files = [
    ['2.275', '10.06.2015 23:21'],
    ['3.822', '14.06.2015 12:25'],
    ['3.636', '14.06.2015 12:25'],
    ['2.984', '14.06.2015 12:25'],
    ['3.437', '14.06.2015 12:26'],
    ['3.413', '14.06.2015 12:26'],
    ['3.381', '14.06.2015 12:26'],
    ['3.477', '14.06.2015 12:26'],
    ['2.640', '14.06.2015 12:37'],
    ['2.745', '14.06.2015 12:37'],
    ['3.086', '14.06.2015 12:37'],
    ['3.491', '14.06.2015 12:37'],
    ['4.120', '14.06.2015 14:39'],
    ['3.116', '14.06.2015 15:53'],
    ['2.605', '14.06.2015 15:53'],
    ['2.671', '14.06.2015 15:53'],
    ['2.725', '15.06.2015 09:43'],
    ['2.778', '15.06.2015 09:43'],
    ['2.604', '15.06.2015 09:43'],
    ['2.717', '15.06.2015 09:43'],
    ['2.548', '15.06.2015 09:43'],
    ['2.384', '15.06.2015 09:43'],
    ['2.393', '15.06.2015 09:43'],
    ['2.315', '15.06.2015 09:43'],
    ['2.326', '15.06.2015 09:43'],
    ['2.369', '15.06.2015 09:43'],
    ['2.366', '15.06.2015 09:43'],
    ['2.292', '15.06.2015 09:43'],
    ['2.298', '15.06.2015 09:43'],
    ['2.418', '15.06.2015 09:53'],
    ['2.450', '15.06.2015 09:53'],
    ['2.441', '15.06.2015 09:53'],
    ['2.432', '15.06.2015 09:53'],
    ['2.568', '15.06.2015 09:53'],
    ['2.710', '15.06.2015 09:53'],
    ['2.869', '15.06.2015 09:54'],
    ['2.717', '15.06.2015 09:54'],
    ['2.847', '15.06.2015 16:18'],
    ['2.659', '15.06.2015 16:18']
];

const tick = '<span class="check"><svg width="9" height="9" viewBox="0 0 9 9"><path d="M.8 4L3.500 7L8.200 1.500" fill="none" stroke="#000" stroke-width="2.200"/></svg></span>';

document.getElementById('rows').innerHTML = files.map((file, i) => `
    <div class="row${i === 0 ? ' selected' : ''}">
        <span class="fname">${i === 0 ? tick : ''}<svg class="pic"><use href="#i-picture"/></svg>IMG_00${13 + i}.JPG</span>
        <span class="type">JPEG-Bild</span>
        <span class="size">${file[0]} KB</span>
        <span></span>
        <span>${file[1]}</span>
        <span>4000 X 3000</span>
    </div>`).join('');
```
